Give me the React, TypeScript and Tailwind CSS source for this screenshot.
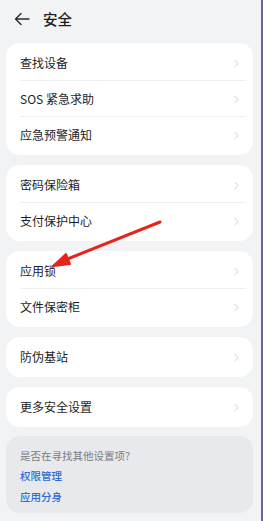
import { ChevronRight } from "lucide-react";

const groups: string[][] = [
  ["查找设备", "SOS 紧急求助", "应急预警通知"],
  ["密码保险箱", "支付保护中心"],
  ["应用锁", "文件保密柜"],
  ["防伪基站"],
  ["更多安全设置"],
];

function Row({ label, last }: { label: string; last: boolean }) {
  return (
    <div className="relative flex h-[36px] items-center justify-between pl-[14px] pr-[10px]">
      <span className="text-[12px] text-[#1d1d1f]">{label}</span>
      <ChevronRight className="h-[13px] w-[13px] text-[#c4c6ca]" strokeWidth={1.6} />
      {!last && <div className="absolute bottom-0 left-[14px] right-[8px] h-px bg-[#eceef0]" />}
    </div>
  );
}

export default function App() {
  return (
    <div
      className="relative flex h-[521px] w-[263px] overflow-hidden bg-[#f1f3f5]"
      style={{ fontFamily: '"Noto Sans CJK SC", "Noto Sans", sans-serif' }}
    >
      <div className="flex w-[261px] flex-col">
        {/* Header */}
        <div className="flex h-[36px] items-center gap-[13px] pl-[14px] pt-[1px]">
          <svg width="16" height="14" viewBox="0 0 16 14" fill="none" stroke="#2a2a2a" strokeWidth="1.4" strokeLinecap="round" strokeLinejoin="round">
            <path d="M15 7H1.5M7 1.5L1.5 7L7 12.5" />
          </svg>
          <span className="text-[14.5px] font-medium text-[#1d1d1f]">安全</span>
        </div>

        <div className="ml-[6px] mt-[7px] flex w-[247px] flex-col gap-[10px]">
          {groups.map((g, i) => (
            <div key={i} className="rounded-[14px] bg-white py-[2px]">
              {g.map((label, j) => (
                <Row key={label} label={label} last={j === g.length - 1} />
              ))}
            </div>
          ))}

          {/* Suggestions */}
          <div className="mt-[-1px] flex h-[77px] flex-col rounded-[14px] bg-[#e8e9ec] pl-[14px] pt-[12px]">
            <span className="text-[10.5px] leading-[16px] text-[#7a7c80]">是否在寻找其他设置项?</span>
            <span className="mt-[4px] text-[10.5px] font-medium leading-[16px] text-[#2e6bd6]">权限管理</span>
            <span className="mt-[5px] text-[10.5px] font-medium leading-[16px] text-[#2e6bd6]">应用分身</span>
          </div>
        </div>
      </div>

      {/* right edge strip */}
      <div className="w-[2px] bg-[#6d62a3]" />

      {/* red annotation arrow */}
      <svg className="absolute left-0 top-0" width="263" height="521" viewBox="0 0 263 521" fill="none">
        <path d="M160 222 L60 262" stroke="#e8231b" strokeWidth="3" strokeLinecap="round" />
        <path d="M53 266 L66 254 L70 264 Z" fill="#e8231b" stroke="#e8231b" strokeWidth="2" strokeLinejoin="round" />
      </svg>
    </div>
  );
}
